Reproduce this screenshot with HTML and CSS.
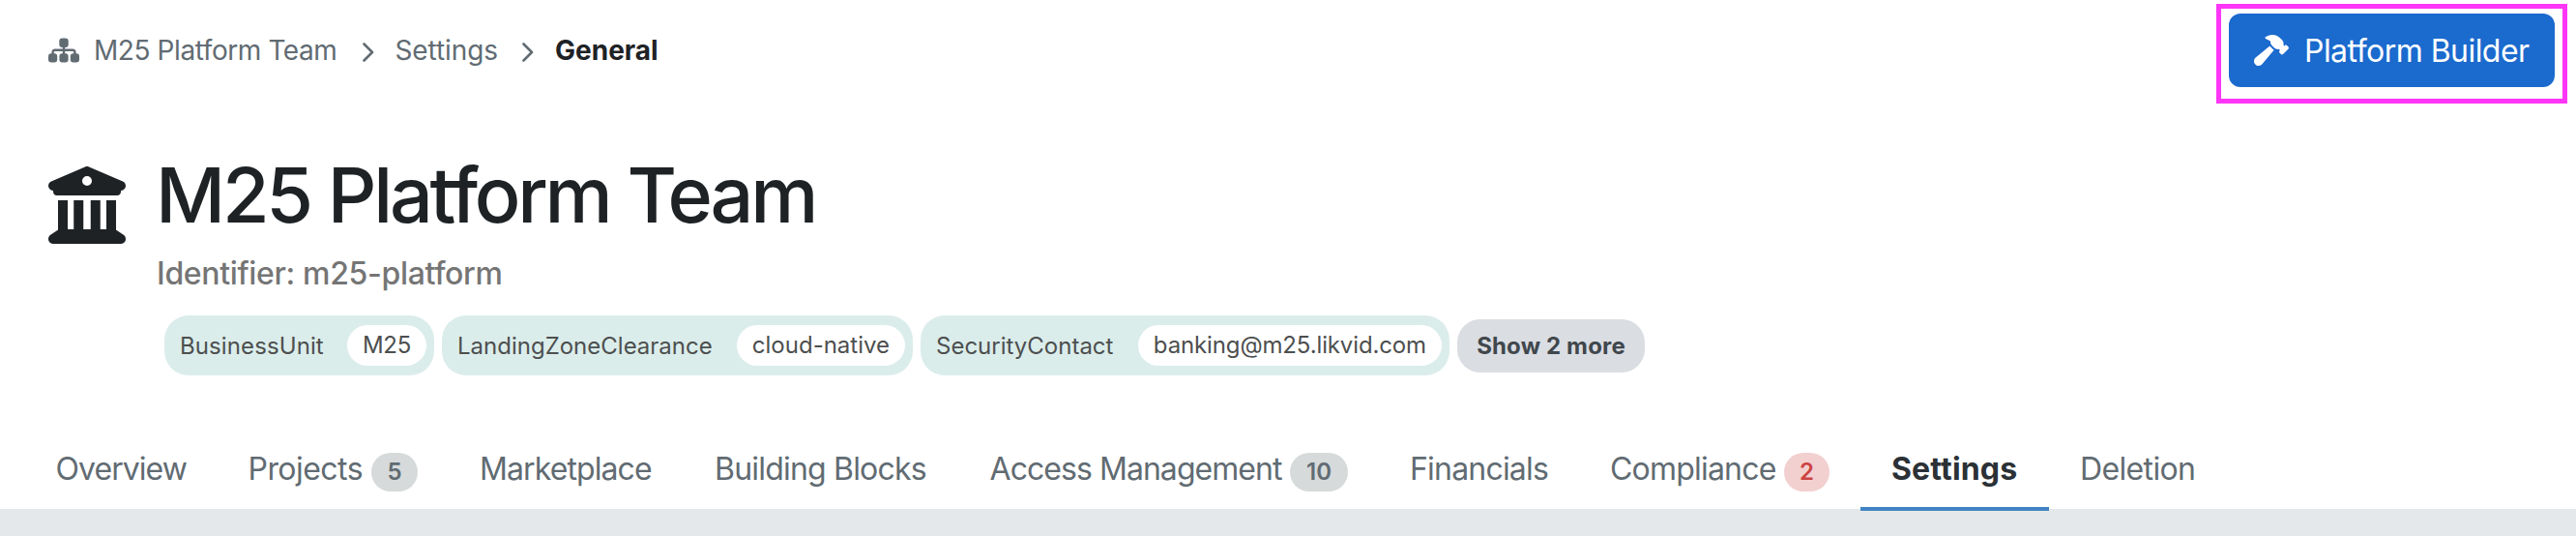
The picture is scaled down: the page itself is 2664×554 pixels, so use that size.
FILE: index.html
```
<!DOCTYPE html>
<html lang="en">
<head>
<meta charset="utf-8">
<title>M25 Platform Team</title>
<link rel="stylesheet" href="styles.css">
</head>
<body>
<header class="topbar">
  <nav class="breadcrumb">
    <svg class="sitemap" viewBox="0 0 32 26"><rect x="11.300" y="0.500" width="9.400" height="9.400" rx="3"/><rect x="0" y="16.300" width="9.200" height="9.200" rx="3"/><rect x="11.400" y="16.300" width="9.200" height="9.200" rx="3"/><rect x="22.800" y="16.300" width="9.200" height="9.200" rx="3"/><path d="M16 9v8M4.600 17v-2q0-2.300 2.300-2.300h18.200q2.300 0 2.300 2.300v2"/></svg>
    <a class="crumb crumb-team">M25 Platform Team</a>
    <svg class="chevron" viewBox="0 0 12 20"><path d="M1.500 1.500 10 10l-8.500 8.500"/></svg>
    <a class="crumb crumb-settings">Settings</a>
    <svg class="chevron" viewBox="0 0 12 20"><path d="M1.500 1.500 10 10l-8.500 8.500"/></svg>
    <span class="crumb crumb-current">General</span>
  </nav>
  <div class="highlight">
    <button class="builder">
      <svg class="hammer" viewBox="0 0 576 512"><path d="M413.500 237.500c-28.200 4.800-58.200-3.600-80-25.400l-38.100-38.100C280.400 159 272 138.800 272 117.600V105.500L192.300 62c-5.300-2.900-8.600-8.600-8.300-14.700s3.900-11.500 9.500-14l47.200-21C259.100 4.200 279 0 299.200 0h18.100c36.700 0 72 14 98.700 39.100l44.600 42c24.200 22.800 33.200 55.700 26.600 86L503 183l8-8c9.400-9.400 24.600-9.400 33.900 0l24 24c9.400 9.400 9.400 24.600 0 33.900l-88 88c-9.400 9.400-24.600 9.400-33.900 0l-24-24c-9.400-9.400-9.400-24.600 0-33.900l8-8-17.500-17.500zM27.400 377.100L260.900 182.600c3.500 4.900 7.500 9.600 11.800 14l38.100 38.100c6 6 12.400 11.200 19.200 15.700L134.900 484.600c-14.500 17.400-36 27.400-58.600 27.400C34.100 512 0 477.800 0 435.700c0-22.600 10.100-44.100 27.400-58.600z"/></svg>
      <span>Platform Builder</span>
    </button>
  </div>
</header>

<section class="hero">
  <svg class="landmark" viewBox="0 0 512 512"><path d="M243.400 2.600l-224 96c-14 6.100-21.800 21-18.700 35.800S16.800 160 32 160v8c0 13.300 10.700 24 24 24H456c13.300 0 24-10.700 24-24v-8c15.200 0 28.300-10.700 31.300-25.600s-4.800-29.900-18.700-35.800l-224-96c-8-3.400-17.200-3.400-25.200 0zM128 224H64V420.300c-.6 .3-1.200 .7-1.800 1.100l-48 32c-11.700 7.800-17 22.400-12.900 35.900S17.900 512 32 512H480c14.100 0 26.500-9.200 30.600-22.700s-1.100-28.100-12.900-35.900l-48-32c-.6-.4-1.200-.7-1.800-1.100V224H384V416H344V224H280V416H232V224H168V416H128V224zM256 64a32 32 0 1 1 0 64 32 32 0 1 1 0-64z"/></svg>
  <div class="hero-text">
    <h1 class="title">M25 Platform Team</h1>
    <p class="identifier">Identifier: m25-platform</p>
    <div class="tags">
      <div class="tag tag-unit"><span class="tag-key">BusinessUnit</span><span class="tag-value">M25</span></div>
      <div class="tag tag-zone"><span class="tag-key">LandingZoneClearance</span><span class="tag-value">cloud-native</span></div>
      <div class="tag tag-contact"><span class="tag-key">SecurityContact</span><span class="tag-value">banking@m25.likvid.com</span></div>
      <button class="show-more">Show 2 more</button>
    </div>
  </div>
</section>

<nav class="tabs">
  <a class="tab"><span class="label w-overview">Overview</span></a>
  <a class="tab"><span class="label w-projects">Projects</span><span class="badge">5</span></a>
  <a class="tab"><span class="label w-market">Marketplace</span></a>
  <a class="tab"><span class="label w-blocks">Building Blocks</span></a>
  <a class="tab"><span class="label w-access">Access Management</span><span class="badge badge-wide">10</span></a>
  <a class="tab"><span class="label w-fin">Financials</span></a>
  <a class="tab"><span class="label w-comp">Compliance</span><span class="badge badge-alert">2</span></a>
  <a class="tab tab-active"><span class="label w-settings">Settings</span></a>
  <a class="tab"><span class="label w-del">Deletion</span></a>
</nav>
<main class="content"></main>
</body>
</html>
```
FILE: styles.css
```
* { box-sizing: border-box; }
body {
  margin: 0;
  height: 554px;
  overflow: hidden;
  display: flex;
  flex-direction: column;
  background: #fff;
  color: #1e2225;
  font-family: Inter, "Liberation Sans", sans-serif;
  font-variant-ligatures: none;
  white-space: nowrap;
}
button { font: inherit; border: 0; padding: 0; }

.topbar {
  height: 108px;
  padding: 4px 9px 0 50px;
  display: flex;
  justify-content: space-between;
  align-items: flex-start;
}
.breadcrumb {
  height: 96px;
  display: flex;
  align-items: center;
  color: #616b72;
  font-size: 28px;
  line-height: 34px;
}
.sitemap { width: 32px; height: 26px; fill: #616b72; margin-right: 15px; }
.sitemap path { fill: none; stroke: #616b72; stroke-width: 2.4; }
.chevron {
  width: 12px;
  height: 20px;
  margin: 3px 22px 0 25.5px;
  fill: none;
  stroke: #616b72;
  stroke-width: 2.6;
  stroke-linecap: round;
  stroke-linejoin: round;
}
.crumb { flex: none; }
.crumb-team { width: 252px; letter-spacing: -0.42px; }
.crumb-settings { width: 106px; letter-spacing: -0.1px; }
.crumb-current { color: #1e2225; font-weight: 700; }

.highlight {
  width: 363px;
  height: 103px;
  border: 5px solid #ff35f8;
  padding: 5px 8px;
}
.builder {
  width: 337px;
  height: 76px;
  border-radius: 12px;
  background: #1b6ace;
  color: #fff;
  display: flex;
  align-items: center;
  padding-left: 26px;
  font-size: 32px;
  letter-spacing: -0.54px;
}
.hammer { width: 36px; height: 32px; fill: #fff; margin-right: 16px; }

.hero { height: 340px; padding-left: 50px; display: flex; }
.landmark { width: 80px; height: 80px; margin-top: 64px; fill: #1e2225; }
.hero-text { margin-left: 31px; }
.title {
  margin: 45px 0 0;
  font-size: 79px;
  line-height: 96px;
  font-weight: 500;
  letter-spacing: -3.22px;
}
.identifier {
  margin: 15px 0 0 1px;
  font-size: 32px;
  line-height: 38px;
  font-weight: 500;
  letter-spacing: -0.34px;
  color: #757575;
}
.tags { display: flex; align-items: center; gap: 8px; margin: 24px 0 0 9px; }
.tag {
  height: 62px;
  border-radius: 25px;
  background: #dbedeb;
  color: #4d4f4f;
  font-size: 24px;
  display: flex;
  align-items: center;
  justify-content: space-between;
  padding: 0 8px 0 16px;
}
.tag-value { height: 42px; line-height: 41px; border-radius: 21px; background: #fff; padding: 0 16px; }
.tag-unit { width: 279px; }
.tag-unit .tag-key { letter-spacing: 0.1px; }
.tag-unit .tag-value { letter-spacing: -0.3px; }
.tag-zone { width: 487px; }
.tag-contact { width: 547px; }
.tag-contact .tag-value { letter-spacing: -0.13px; }
.show-more {
  width: 194px;
  height: 55px;
  border-radius: 24px;
  background: #dadde2;
  color: #40474c;
  font-size: 24px;
  font-weight: 700;
  letter-spacing: 0.15px;
}

.tabs {
  height: 78px;
  padding-left: 25.5px;
  display: flex;
  position: relative;
}
.tab {
  height: 80px;
  padding: 0 32px;
  display: flex;
  align-items: center;
  color: #616b72;
  font-size: 32px;
}
.label { padding-bottom: 7px; letter-spacing: -0.95px; }
.w-overview { width: 135px; }
.w-projects { width: 118.5px; letter-spacing: -0.55px; }
.w-market { width: 179px; letter-spacing: -0.9px; }
.w-blocks { width: 220.5px; letter-spacing: -0.8px; }
.w-access { width: 301.5px; }
.w-fin { width: 143px; letter-spacing: -0.8px; }
.w-comp { width: 171px; letter-spacing: -0.8px; }
.w-settings { width: 131px; letter-spacing: 0.15px; }
.w-del { letter-spacing: -0.65px; }
.badge {
  height: 40px;
  width: 48px;
  margin-left: 9px;
  border-radius: 20px;
  background: #d6dada;
  text-align: center;
  font-size: 24px;
  line-height: 39px;
  font-weight: 600;
}
.badge-wide { width: 60px; }
.badge-alert { width: 47px; background: #f3d0d0; color: #cc4443; }
.tab-active {
  color: #2b3136;
  font-weight: 700;
  padding-top: 4px;
  border-bottom: 4px solid #4084c4;
}
.content { flex: 1; background: #e4e8eb; }
```
